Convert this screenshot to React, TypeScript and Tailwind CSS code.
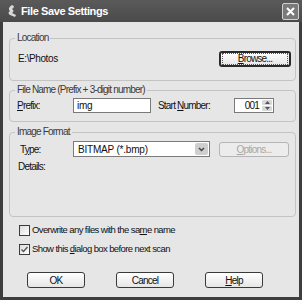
import React from "react";

const font = { fontFamily: '"Liberation Sans", Arial, sans-serif' };

function U({ children }: { children: React.ReactNode }) {
  return <span className="underline underline-offset-[1px]">{children}</span>;
}

function Btn({
  children,
  className = "",
  def = false,
  disabled = false,
}: {
  children: React.ReactNode;
  className?: string;
  def?: boolean;
  disabled?: boolean;
}) {
  return (
    <div
      className={`flex items-center justify-center rounded-[3px] text-[10px] ${
        disabled
          ? "border border-[#b5b5b5] bg-[#ececec] text-[#a8a8a8]"
          : def
          ? "border-2 border-[#2a2a2a] bg-gradient-to-b from-[#ffffff] to-[#e6e6e6] text-[#111]"
          : "border border-[#3a3a3a] bg-gradient-to-b from-[#ffffff] to-[#e6e6e6] text-[#111]"
      } ${className}`}
    >
      {def ? (
        <div className="flex h-full w-full items-center justify-center border border-dotted border-[#555] m-[1px]">
          {children}
        </div>
      ) : (
        children
      )}
    </div>
  );
}

function Group({
  title,
  className = "",
  children,
}: {
  title: string;
  className?: string;
  children: React.ReactNode;
}) {
  return (
    <fieldset
      className={`ml-[6px] mr-[3px] rounded-[4px] border border-[#c4c4c4] px-[7px] ${className}`}
    >
      <legend className="ml-[-2px] px-[2px] text-[10px] leading-[12px] text-[#3a3a3a]">
        {title}
      </legend>
      {children}
    </fieldset>
  );
}

function Check({ checked, children }: { checked?: boolean; children: React.ReactNode }) {
  return (
    <div className="ml-[16px] flex h-[13px] items-center gap-[2px] text-[9.5px] tracking-[-0.6px] text-[#111]">
      <div className="flex h-[11px] w-[11px] shrink-0 items-center justify-center border border-[#3c3c3c] bg-gradient-to-br from-[#dcdcdc] to-[#ffffff]">
        {checked && (
          <svg width="9" height="9" viewBox="0 0 9 9">
            <path d="M1.5 4.5 L3.5 6.5 L7.5 2" stroke="#555" strokeWidth="1.4" fill="none" />
          </svg>
        )}
      </div>
      <span>{children}</span>
    </div>
  );
}

export default function App() {
  return (
    <div style={font} className="h-[300px] w-[302px] bg-[#3e3e3e] flex flex-col">
      {/* title bar */}
      <div className="flex h-[22px] items-center bg-gradient-to-b from-[#5a5a5a] to-[#4a4a4a] pl-[6px] pr-[3px]">
        <svg width="12" height="14" viewBox="0 0 12 14" className="mr-[3px]">
          <path d="M6 1 C3 3 2 5 4 7 C2 8 2 10 4 11 L9 13 L10 11 L6 9 C8 8 8 6 6 5 C8 4 9 2 6 1 Z" fill="#d8d8d8" />
        </svg>
        <span className="text-[11px] font-bold tracking-[-0.4px] text-white">File Save Settings</span>
        <div className="ml-auto flex h-[17px] w-[17px] items-center justify-center rounded-[2px] border border-[#d0d0d0] bg-[#7a7a7a]">
          <svg width="11" height="11" viewBox="0 0 11 11">
            <path d="M2 2 L9 9 M9 2 L2 9" stroke="white" strokeWidth="2" />
          </svg>
        </div>
      </div>
      {/* body */}
      <div className="mx-[3px] mb-[3px] flex flex-1 flex-col bg-[#e6e6e6] pt-[10px] tracking-[-0.8px]">
        <Group title="Location" className="h-[49px]">
          <div className="mt-[7px] flex h-[15px] items-center">
            <span className="text-[10px] text-[#111] ml-[1px] tracking-[-0.4px]">E:\Photos</span>
            <Btn def className="ml-auto mr-[-3px] h-[16px] w-[72px]">
              <U>B</U>rowse...
            </Btn>
          </div>
        </Group>
        <Group title="File Name (Prefix + 3-digit number)" className="mt-[3px] h-[38px]">
          <div className="mt-[2px] flex h-[15px] items-center text-[10px] text-[#111]">
            <span className="w-[56px]">
              <U>P</U>refix:
            </span>
            <div className="flex h-[15px] w-[78px] items-center border border-[#7a7a7a] bg-white pl-[3px] tracking-[-0.3px]">
              img
            </div>
            <span className="ml-[7px] w-[76px]">
              Start <U>N</U>umber:
            </span>
            <div className="flex h-[15px] w-[40px] items-center border border-[#7a7a7a] bg-white">
              <span className="flex-1 text-right pr-[2px]">001</span>
              <div className="flex h-full w-[12px] flex-col gap-[1px] p-[1px]">
                <div className="flex flex-1 items-center justify-center rounded-[1px] bg-[#d8d8d8]">
                  <svg width="5" height="3" viewBox="0 0 5 3"><path d="M0 3 L2.5 0 L5 3Z" fill="#555" /></svg>
                </div>
                <div className="flex flex-1 items-center justify-center rounded-[1px] bg-[#d8d8d8]">
                  <svg width="5" height="3" viewBox="0 0 5 3"><path d="M0 0 L2.5 3 L5 0Z" fill="#555" /></svg>
                </div>
              </div>
            </div>
          </div>
        </Group>
        <Group title="Image Format" className="mt-[4px] h-[91px]">
          <div className="mt-[3px] flex h-[16px] items-center text-[10px] text-[#111]">
            <span className="w-[56px] ml-[3px]">
              T<U>y</U>pe:
            </span>
            <div className="ml-[-3px] flex h-[16px] w-[137px] items-center border border-[#7a7a7a] bg-white pl-[4px] tracking-[-0.2px]">
              <span className="flex-1">BITMAP (*.bmp)</span>
              <div className="m-[1px] flex h-[12px] w-[13px] items-center justify-center rounded-[2px] bg-[#cfcfcf]">
                <svg width="7" height="5" viewBox="0 0 7 5"><path d="M1 1 L3.5 3.5 L6 1" stroke="#444" strokeWidth="1.5" fill="none" /></svg>
              </div>
            </div>
            <Btn disabled className="ml-auto mr-[-1px] h-[15px] w-[70px]">
              <U>O</U>ptions...
            </Btn>
          </div>
          <div className="mt-[4px] text-[10px] leading-[12px] text-[#111] ml-[1px]">Details:</div>
        </Group>
        <div className="mt-[7px]">
          <Check>
            Overwrite any files with the sa<U>m</U>e name
          </Check>
        </div>
        <div className="mt-[6px]">
          <Check checked>
            Show this <U>d</U>ialog box before next scan
          </Check>
        </div>
        <div className="mt-[16px] flex gap-[31px] pl-[24px]">
          <Btn className="h-[16px] w-[58px]">OK</Btn>
          <Btn className="h-[16px] w-[58px]">Cancel</Btn>
          <Btn className="h-[16px] w-[58px]">
            <U>H</U>elp
          </Btn>
        </div>
      </div>
    </div>
  );
}
